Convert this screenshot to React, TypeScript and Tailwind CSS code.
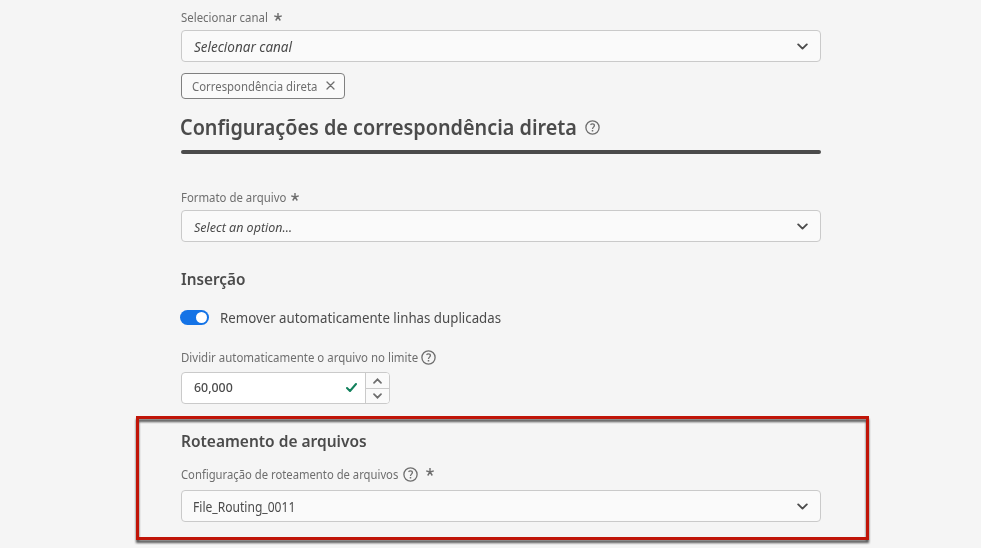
import { useLayoutEffect, useRef, useState } from "react";

type TextProps = { children: string; width: number; className?: string };

/* Single line of text, condensed or widened to the given advance width. */
function Line({ children, width, className = "" }: TextProps) {
  const ref = useRef<HTMLSpanElement>(null);
  const [scale, setScale] = useState(1);
  useLayoutEffect(() => {
    if (ref.current) setScale(width / ref.current.offsetWidth);
  }, [width]);
  return (
    <span className="block shrink-0 whitespace-nowrap" style={{ width }}>
      <span ref={ref} className={`inline-block origin-left ${className}`} style={{ transform: `scaleX(${scale})` }}>
        {children}
      </span>
    </span>
  );
}

function Chevron() {
  return (
    <svg className="h-[7px] w-[11px] shrink-0" viewBox="0 0 11 7" fill="none" stroke="#4b4b4b" strokeWidth="1.9" strokeLinecap="round" strokeLinejoin="round">
      <path d="M1.2 1.4l4.3 4.2 4.3-4.2" />
    </svg>
  );
}

function Asterisk() {
  return (
    <svg className="size-[8px] shrink-0" viewBox="0 0 8 8" stroke="#6e6e6e" strokeWidth="1.4">
      <path d="M4 4V0M4 4L.2 2.8M4 4l3.8-1.2M4 4L1.7 7.5M4 4l2.3 3.5" />
    </svg>
  );
}

function Help({ className = "size-[15px]" }: { className?: string }) {
  return (
    <svg className={`shrink-0 ${className}`} viewBox="0 0 15 15" fill="none" stroke="#6e6e6e" strokeWidth="1.3">
      <circle cx="7.5" cy="7.5" r="6.6" />
      <path d="M5.5 4.7c.5-.5 1.1-.8 1.9-.8 1.2 0 2 .7 2 1.7 0 1.4-1.9 1.7-1.9 3.3" />
      <path d="M7.5 10v1.5" strokeWidth="1.5" />
    </svg>
  );
}

function Select({ children, width, className }: TextProps) {
  return (
    <div className="flex h-[32px] items-center justify-between rounded-[4px] border border-[#cacaca] bg-[#fafafa] pr-[12px] pl-[11.5px] text-[#4b4b4b]">
      <Line width={width} className={className}>{children}</Line>
      <Chevron />
    </div>
  );
}

export default function App() {
  return (
    <main className="h-[548px] w-[981px] overflow-hidden bg-[#f5f5f5] font-['Noto_Sans',sans-serif] text-[#4b4b4b]">
      <div className="ml-[181px] w-[640px]">
        <div className="-ml-[0.5px] flex h-[30px] items-center gap-[6px] pt-[5px] text-[13px] text-[#6e6e6e]">
          <Line width={87}>Selecionar canal</Line>
          <span className="pb-[2px]"><Asterisk /></span>
        </div>
        <Select width={98} className="text-[15px] italic">Selecionar canal</Select>
        <div className="mt-[11px] flex h-[26px] w-[164px] items-center justify-between rounded-[4px] border border-[#808080] bg-[#fafafa] pr-[9px] pl-[10px] text-[13px] text-[#6e6e6e]">
          <div className="pt-px"><Line width={125}>Correspondência direta</Line></div>
          <svg className="-mt-px size-[9px]" viewBox="0 0 9 9" stroke="#6e6e6e" strokeWidth="1.3" strokeLinecap="round">
            <path d="M1 1l7 7M8 1L1 8" />
          </svg>
        </div>
        <h1 className="-ml-px flex h-[51px] items-center gap-[8px] pt-[2px] text-[22px] leading-[30px] font-semibold">
          <Line width={397}>Configurações de correspondência direta</Line>
          <Help className="mt-[4px] size-[15px]" />
        </h1>
        <div className="h-[4px] rounded-full bg-[#4b4b4b]" />

        <div className="-ml-[0.5px] flex h-[56px] items-end gap-[5.5px] pb-[3px] text-[13px] leading-[19px] text-[#6e6e6e]">
          <Line width={105}>Formato de arquivo</Line>
          <span className="pb-[6px]"><Asterisk /></span>
        </div>
        <Select width={98} className="pb-px text-[13px] italic">Select an option…</Select>

        <h2 className="mt-[25px] -ml-[0.5px] flex h-[24px] items-center text-[16.5px] font-semibold">
          <Line width={64}>Inserção</Line>
        </h2>
        <div className="mt-[14px] -ml-px flex h-[26px] items-center gap-[11px] text-[15px]">
          <span className="-mt-px flex h-[15px] w-[29px] items-center justify-end rounded-full bg-[#1473e6] pr-[2px]">
            <span className="size-[11px] rounded-full bg-white" />
          </span>
          <div className="pb-[2px]"><Line width={281.5}>Remover automaticamente linhas duplicadas</Line></div>
        </div>
        <div className="mt-[16px] -ml-[0.5px] flex h-[20px] items-center gap-[3.5px] text-[13px] text-[#6e6e6e]">
          <div className="pt-[2px]"><Line width={237}>Dividir automaticamente o arquivo no limite</Line></div>
          <Help />
        </div>
        <div className="mt-[5px] flex h-[32px] w-[209px] overflow-hidden rounded-[4px] border border-[#cacaca] bg-white">
          <div className="flex grow items-center justify-between pr-[8px] pl-[11.5px] text-[13px] font-medium">
            <Line width={39}>60,000</Line>
            <svg className="-mt-px h-[9px] w-[11px]" viewBox="0 0 11 9" fill="none" stroke="#12805c" strokeWidth="2" strokeLinecap="round" strokeLinejoin="round">
              <path d="M1 5l3 3 6-7" />
            </svg>
          </div>
          <div className="flex w-[24px] flex-col border-l border-[#cacaca] bg-[#fafafa]">
            <div className="flex h-[16px] items-center justify-center border-b border-[#cacaca] pt-px">
              <svg className="h-[6px] w-[9px]" viewBox="0 0 9 6" fill="none" stroke="#6e6e6e" strokeWidth="1.7" strokeLinecap="round"><path d="M1 4.8l3.5-3.5L8 4.8" /></svg>
            </div>
            <div className="flex h-[14px] items-center justify-center pb-px">
              <svg className="h-[6px] w-[9px]" viewBox="0 0 9 6" fill="none" stroke="#6e6e6e" strokeWidth="1.7" strokeLinecap="round"><path d="M1 1.2l3.5 3.5L8 1.2" /></svg>
            </div>
          </div>
        </div>
      </div>

      <section className="relative mt-[12px] ml-[136px] h-[124px] w-[733px] pt-[13px] pr-[48px] pl-[45px]">
        <div className="pointer-events-none absolute inset-0 border-[3px] border-[#c01508] drop-shadow-[0_3px_1px_rgba(0,0,0,0.65)]" />
        <h2 className="-ml-[0.5px] flex h-[24px] items-center text-[16.5px] font-semibold">
          <Line width={186}>Roteamento de arquivos</Line>
        </h2>
        <div className="mt-[11px] -ml-[0.5px] flex h-[20px] items-center gap-[5px] text-[13px] text-[#6e6e6e]">
          <div className="pt-[2px]"><Line width={217.5}>Configuração de roteamento de arquivos</Line></div>
          <Help />
          <span className="-mt-[4px] pl-[2.5px]"><Asterisk /></span>
        </div>
        <div className="mt-[6px]">
          <Select width={102} className="-ml-px text-[13.5px]">File_Routing_0011</Select>
        </div>
      </section>
    </main>
  );
}
